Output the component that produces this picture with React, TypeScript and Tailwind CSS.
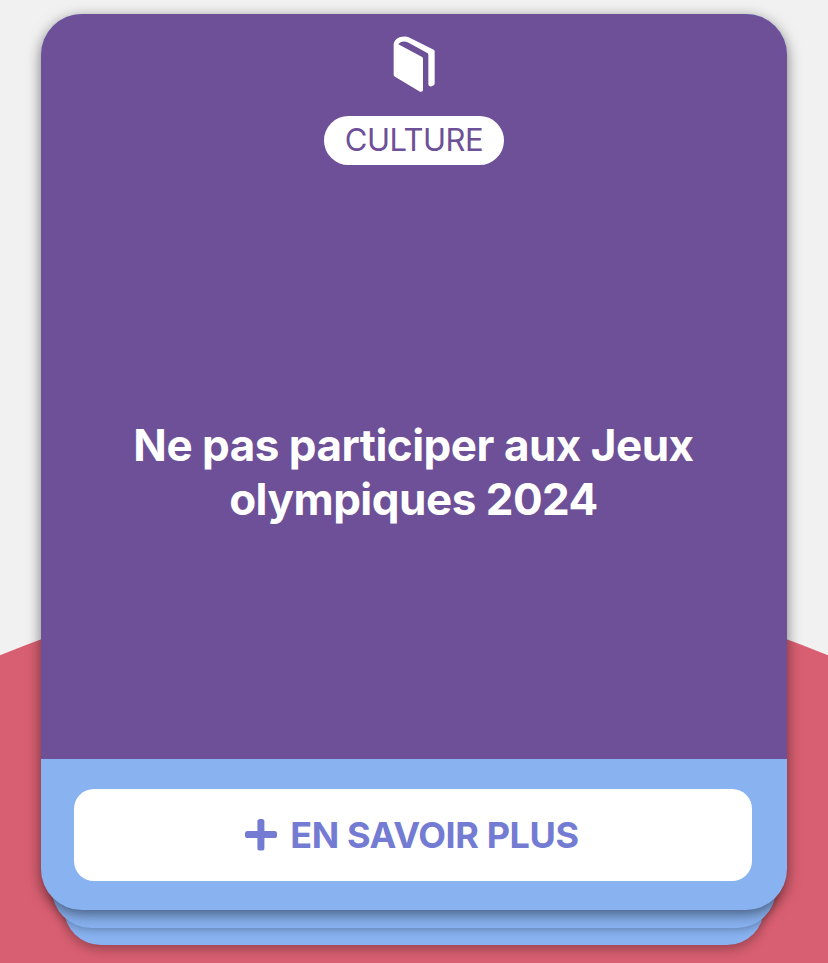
function BookIcon() {
  return (
    <svg className="h-20 w-20" viewBox="0 0 240 240" fill="#fff" aria-hidden="true">
      <path d="M59 152V63C59 46 78 35 98 38Q101 39 104 40L179 77Q182 79 182 82V178Q182 182 179 184L173 187Q163 189 163 181V92Q163 89 160 87L101 55C91 50 77 53 73 61L143 98Q147 100 147 104V197Q147 205 138 203L63 158Q59 156 59 152Z" />
    </svg>
  );
}

function PlusIcon() {
  return (
    <svg className="h-8 w-8 shrink-0" viewBox="0 0 32 32" fill="currentColor" aria-hidden="true">
      <rect x="0" y="12" width="32" height="7" rx="2.6" />
      <rect x="12.4" y="0" width="7" height="31.6" rx="2.6" />
    </svg>
  );
}

export default function App() {
  return (
    <main className="relative isolate h-[963px] w-[828px] overflow-hidden bg-[#f1f1f1] px-[41px] pt-[14px] font-['Inter',sans-serif]">
      <div className="absolute top-[573px] left-[-668px] -z-10 h-[2164px] w-[2164px] rounded-full bg-[#d85f71]" />
      <div className="relative h-[896px] w-[746px]">
        <div className="absolute inset-x-[23px] top-[60px] bottom-[-35px] rounded-[37px] bg-[#88b2f0] shadow-[0_4px_12px_rgba(0,0,0,0.3)]" />
        <div className="absolute inset-x-[11px] top-[30px] bottom-[-18px] rounded-[39px] bg-[#88b2f0] shadow-[0_1px_10px_rgba(0,0,0,0.3)]" />
        <article className="relative flex h-full flex-col overflow-hidden rounded-[41px] bg-[#88b2f0] shadow-[0_4px_14px_rgba(0,0,0,0.5)]">
          <section className="flex h-[745px] flex-col items-center bg-[#6d5097] pt-[10px]">
            <BookIcon />
            <span className="mt-3 flex h-[49px] w-[180px] items-center justify-center rounded-full bg-white text-[31px] tracking-[-0.5px] text-[#6d5097]">
              CULTURE
            </span>
            <h1 className="mt-[253px] pr-px text-center text-[44px] leading-[54px] font-bold tracking-[-0.5px] text-white">
              Ne pas participer aux Jeux
              <br />
              olympiques 2024
            </h1>
          </section>
          <footer className="pt-[30px] pl-[33px]">
            <button className="flex h-[92px] w-[678px] items-center justify-center gap-[13px] rounded-[20px] bg-white pr-[2px] text-[36px] font-bold tracking-[-0.4px] text-[#737bd2]">
              <PlusIcon />
              EN SAVOIR PLUS
            </button>
          </footer>
        </article>
      </div>
    </main>
  );
}
